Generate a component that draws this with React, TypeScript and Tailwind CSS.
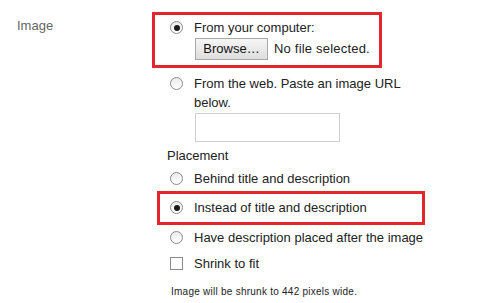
import React from "react";

function Radio({ checked }: { checked?: boolean }) {
  return (
    <span className="flex h-[13px] w-[13px] shrink-0 items-center justify-center rounded-full border border-[#8a8a8a] bg-gradient-to-b from-[#ececec] to-white">
      {checked ? <span className="h-[6px] w-[6px] rounded-full bg-[#1a1a1a]" /> : null}
    </span>
  );
}

export default function App() {
  return (
    <div
      className="flex h-[303px] w-[480px] bg-white text-[13px] text-[#222]"
      style={{ fontFamily: '"Liberation Sans", Arial, sans-serif' }}
    >
      <div className="w-[152px] shrink-0 pl-[17px] pt-[16px] leading-[19px] text-[#666]">Image</div>
      <div className="flex flex-col">
        {/* Box 1 */}
        <div className="mt-[12px] h-[56px] w-[230px] border-[3px] border-[#e3262d] pl-[15px] pt-[3px]">
          <div className="flex h-[19px] items-center gap-[11px] leading-[19px]">
            <Radio checked />
            <span>From your computer:</span>
          </div>
          <div className="ml-[25px] mt-[1px] flex items-center gap-[6px]">
            <button className="h-[22px] w-[73px] border border-[#a8a8a8] bg-gradient-to-b from-[#f6f6f6] to-[#dedede] text-[13px] leading-[20px] text-[#111]">
              Browse…
            </button>
            <span className="tracking-[0.2px]">No file selected.</span>
          </div>
        </div>

        {/* From the web */}
        <div className="ml-[18px] mt-[6px] flex items-start gap-[11px]">
          <span className="mt-[3px]">
            <Radio />
          </span>
          <div className="flex flex-col">
            <span className="w-[232px] leading-[19px]">From the web. Paste an image URL below.</span>
            <input className="ml-[1px] mt-[1px] h-[29px] w-[145px] border border-[#cfcfcf] bg-white outline-none" />
          </div>
        </div>

        {/* Placement */}
        <div className="ml-[15px] mt-[4px] leading-[19px]">Placement</div>
        <div className="ml-[18px] mt-[4px] flex h-[19px] items-center gap-[11px] leading-[19px]">
          <Radio />
          <span>Behind title and description</span>
        </div>

        {/* Box 2 */}
        <div className="ml-[5px] mt-[3px] h-[34px] w-[268px] border-[3px] border-[#e3262d] pl-[10px] pt-[4px]">
          <div className="flex h-[19px] items-center gap-[11px] leading-[19px]">
            <Radio checked />
            <span>Instead of title and description</span>
          </div>
        </div>

        <div className="ml-[18px] mt-[3px] flex h-[19px] items-center gap-[11px] leading-[19px]">
          <Radio />
          <span>Have description placed after the image</span>
        </div>
        <div className="ml-[18px] mt-[7px] flex h-[19px] items-center gap-[11px] leading-[19px]">
          <span className="h-[13px] w-[13px] shrink-0 border border-[#8a8a8a] bg-white" />
          <span>Shrink to fit</span>
        </div>
        <div className="ml-[19px] mt-[12px] text-[10px] leading-[14px] tracking-[0.25px] text-[#222]">
          Image will be shrunk to 442 pixels wide.
        </div>
      </div>
    </div>
  );
}
